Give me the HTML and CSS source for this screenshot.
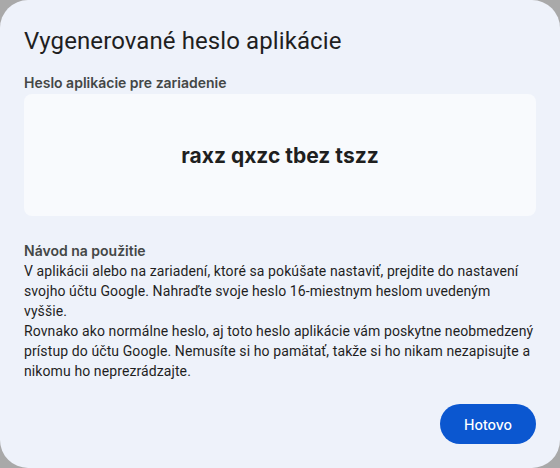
FILE: index.html
```html
<!DOCTYPE html>
<html lang="sk">
<head>
  <meta charset="UTF-8" />
  <title>Vygenerované heslo aplikácie</title>
  <link rel="stylesheet" href="styles.css">
</head>
<body>

<div class="dialog">
  <h1>Vygenerované heslo aplikácie</h1>

  <div class="label">Heslo aplikácie pre zariadenie</div>
  <div class="password">raxz qxzc tbez tszz</div>

  <div class="howto">
    <div class="howto-title">Návod na použitie</div>
    <p>V aplikácii alebo na zariadení, ktoré sa pokúšate nastaviť, prejdite do nastavení svojho účtu Google. Nahraďte svoje heslo 16-miestnym heslom uvedeným vyššie.</p>
    <p>Rovnako ako normálne heslo, aj toto heslo aplikácie vám poskytne neobmedzený prístup do účtu Google. Nemusíte si ho pamätať, takže si ho nikam nezapisujte a nikomu ho neprezrádzajte.</p>
  </div>

  <div class="actions">
    <button class="button">Hotovo</button>
  </div>
</div>

</body>
</html>
```

FILE: styles.css
```css
html, body {
  height: 100%;
}
body {
  margin: 0;
  background: #a9a9a9;
  font-family: Roboto, 'Noto Sans', sans-serif;
  color: #1f1f1f;
}
.dialog {
  box-sizing: border-box;
  height: 468px;
  background: #eef2fa;
  border-radius: 28px;
  padding: 24px;
  display: flex;
  flex-direction: column;
}
h1 {
  margin: 0;
  font-size: 24px;
  font-weight: 400;
  line-height: 32px;
  letter-spacing: 0.1px;
  color: #1f1f1f;
  padding-top: 1px;
}
.label {
  margin-top: 17px;
  font-family: Inter, sans-serif;
  font-size: 14px;
  font-weight: 600;
  line-height: 18px;
  color: #444746;
}
.password {
  margin-top: 2px;
  height: 122px;
  background: #f8fafd;
  border-radius: 8px;
  display: flex;
  align-items: center;
  justify-content: center;
  font-family: Inter, sans-serif;
  font-size: 21px;
  font-weight: 700;
  color: #1f1f1f;
}
.howto {
  margin-top: 25px;
  font-size: 14px;
  line-height: 20px;
  letter-spacing: 0.1px;
  color: #1f1f1f;
}
.howto-title {
  font-family: Inter, sans-serif;
  font-weight: 600;
  letter-spacing: 0;
  color: #444746;
}
.howto p {
  margin: 0;
}
.actions {
  display: flex;
  justify-content: flex-end;
  margin-top: auto;
}
.button {
  background: #0b57d0;
  color: #fff;
  border: none;
  border-radius: 20px;
  height: 40px;
  padding: 0 24px;
  font-family: Inter, sans-serif;
  font-size: 14px;
  font-weight: 500;
  cursor: pointer;
}
```
